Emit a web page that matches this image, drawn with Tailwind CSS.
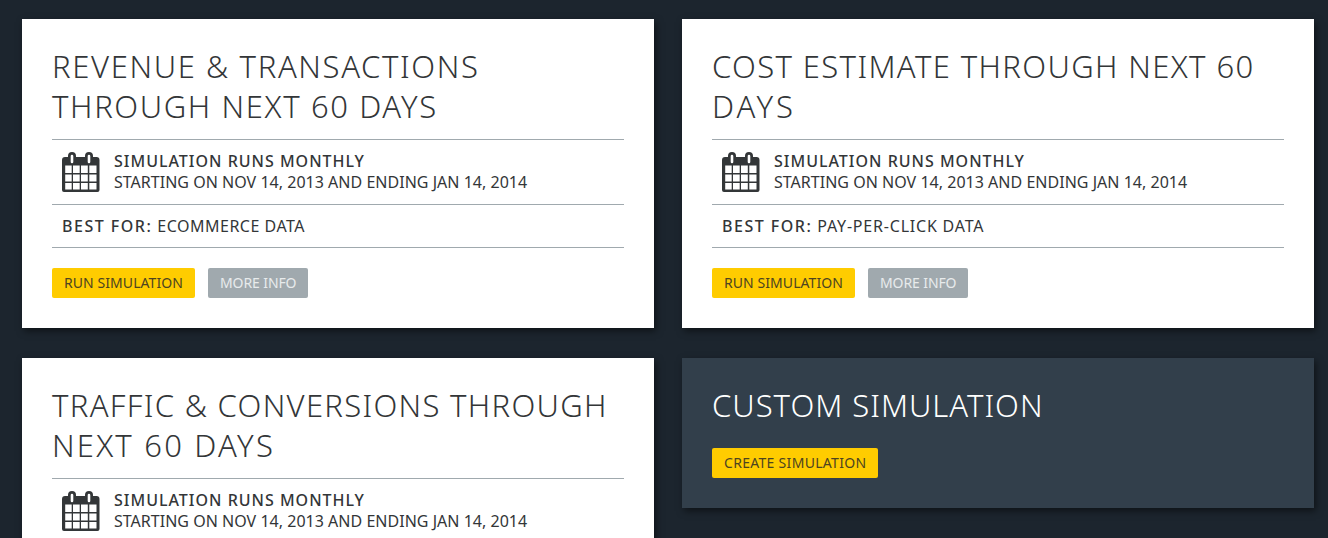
<!DOCTYPE html>
<html lang="en">
<head>
    <meta charset="UTF-8">
    <title>Simulations</title>
    <script src="https://cdn.jsdelivr.net/npm/@tailwindcss/browser@4"></script>
</head>
<body class="bg-[#1c252e] h-[538px] overflow-hidden font-['Noto_Sans',sans-serif]">
    <div class="grid grid-cols-[632px_632px] gap-x-[28px] gap-y-[30px] pl-[22px] pt-[19px] items-start">

        <!-- Revenue card -->
        <div class="bg-white px-[30px] pt-[27px] pb-[30px] shadow-[2px_3px_7px_rgba(0,0,0,0.5)]">
            <h2 class="text-[31px] leading-[40px] font-light tracking-[1.62px] text-[#333638] pb-[13px] border-b border-[#a0a9ae]">REVENUE &amp; TRANSACTIONS THROUGH NEXT 60 DAYS</h2>
            <div class="flex items-center gap-[14px] pl-[10px] h-[65px] border-b border-[#a0a9ae]">
                <svg class="w-[38px] h-[40px] shrink-0" viewBox="0 0 38 40"><path fill="#333638" fill-rule="evenodd" d="M3 5h3V4a4 4 0 0 1 8 0v1h9V4a4 4 0 0 1 8 0v1h3.5a3 3 0 0 1 3 3v30a2 2 0 0 1-2 2H2a2 2 0 0 1-2-2V8a3 3 0 0 1 3-3ZM8.7 4v6a1.3 1.3 0 0 0 2.6 0V4a1.3 1.3 0 0 0-2.6 0Zm17 0v6a1.3 1.3 0 0 0 2.6 0V4a1.3 1.3 0 0 0-2.6 0ZM3.2 13.5V21h6.5v-7.5Zm7.8 0V21h6.7v-7.5Zm8 0V21h6.8v-7.5Zm8.3 0V21h7.2v-7.5ZM3.2 22.5v7h6.5v-7Zm7.8 0v7h6.7v-7Zm8 0v7h6.8v-7Zm8.3 0v7h7.2v-7ZM3.2 31v6.5h6.5V31Zm7.8 0v6.5h6.7V31Zm8 0v6.5h6.8V31Zm8.3 0v6.5h7.2V31Z"/></svg>
                <div class="text-[16px] leading-[21px] text-[#333638]">
                    <div class="font-medium tracking-[1px]">SIMULATION RUNS MONTHLY</div>
                    <div class="tracking-[0.02px]">STARTING ON NOV 14, 2013 AND ENDING JAN 14, 2014</div>
                </div>
            </div>
            <div class="pl-[10px] pb-[1px] h-[43px] flex items-center gap-[5px] text-[16px] text-[#333638] border-b border-[#a0a9ae]">
                <span class="font-medium tracking-[1.5px]">BEST FOR:</span><span class="tracking-[0.5px]">ECOMMERCE DATA</span>
            </div>
            <div class="flex gap-[13px] mt-[20px]">
                <button class="h-[30px] pb-[1px] px-[12px] bg-[#ffcc00] rounded-[2px] text-[14px] tracking-[0.07px] text-[#4d4420]">RUN SIMULATION</button>
                <button class="h-[30px] pb-[1px] px-[12px] bg-[#a0a9ae] rounded-[2px] text-[14px] tracking-[-0.1px] text-[#e8ebec]">MORE INFO</button>
            </div>
        </div>

        <!-- Cost card -->
        <div class="bg-white px-[30px] pt-[27px] pb-[30px] shadow-[2px_3px_7px_rgba(0,0,0,0.5)]">
            <h2 class="text-[31px] leading-[40px] font-light tracking-[1.37px] text-[#333638] pb-[13px] border-b border-[#a0a9ae]">COST ESTIMATE THROUGH NEXT 60 <span class="tracking-[3px]">DAYS</span></h2>
            <div class="flex items-center gap-[14px] pl-[10px] h-[65px] border-b border-[#a0a9ae]">
                <svg class="w-[38px] h-[40px] shrink-0" viewBox="0 0 38 40"><path fill="#333638" fill-rule="evenodd" d="M3 5h3V4a4 4 0 0 1 8 0v1h9V4a4 4 0 0 1 8 0v1h3.5a3 3 0 0 1 3 3v30a2 2 0 0 1-2 2H2a2 2 0 0 1-2-2V8a3 3 0 0 1 3-3ZM8.7 4v6a1.3 1.3 0 0 0 2.6 0V4a1.3 1.3 0 0 0-2.6 0Zm17 0v6a1.3 1.3 0 0 0 2.6 0V4a1.3 1.3 0 0 0-2.6 0ZM3.2 13.5V21h6.5v-7.5Zm7.8 0V21h6.7v-7.5Zm8 0V21h6.8v-7.5Zm8.3 0V21h7.2v-7.5ZM3.2 22.5v7h6.5v-7Zm7.8 0v7h6.7v-7Zm8 0v7h6.8v-7Zm8.3 0v7h7.2v-7ZM3.2 31v6.5h6.5V31Zm7.8 0v6.5h6.7V31Zm8 0v6.5h6.8V31Zm8.3 0v6.5h7.2V31Z"/></svg>
                <div class="text-[16px] leading-[21px] text-[#333638]">
                    <div class="font-medium tracking-[1px]">SIMULATION RUNS MONTHLY</div>
                    <div class="tracking-[0.02px]">STARTING ON NOV 14, 2013 AND ENDING JAN 14, 2014</div>
                </div>
            </div>
            <div class="pl-[10px] pb-[1px] h-[43px] flex items-center gap-[5px] text-[16px] text-[#333638] border-b border-[#a0a9ae]">
                <span class="font-medium tracking-[1.5px]">BEST FOR:</span><span class="tracking-[0.8px]">PAY-PER-CLICK DATA</span>
            </div>
            <div class="flex gap-[13px] mt-[20px]">
                <button class="h-[30px] pb-[1px] px-[12px] bg-[#ffcc00] rounded-[2px] text-[14px] tracking-[0.07px] text-[#4d4420]">RUN SIMULATION</button>
                <button class="h-[30px] pb-[1px] px-[12px] bg-[#a0a9ae] rounded-[2px] text-[14px] tracking-[-0.1px] text-[#e8ebec]">MORE INFO</button>
            </div>
        </div>

        <!-- Traffic card -->
        <div class="bg-white px-[30px] pt-[27px] pb-[30px] shadow-[2px_3px_7px_rgba(0,0,0,0.5)]">
            <h2 class="text-[31px] leading-[40px] font-light tracking-[1.3px] text-[#333638] pb-[13px] border-b border-[#a0a9ae]">TRAFFIC &amp; CONVERSIONS THROUGH <span class="tracking-[2.2px]">NEXT 60 DAYS</span></h2>
            <div class="flex items-center gap-[14px] pl-[10px] h-[65px] border-b border-[#a0a9ae]">
                <svg class="w-[38px] h-[40px] shrink-0" viewBox="0 0 38 40"><path fill="#333638" fill-rule="evenodd" d="M3 5h3V4a4 4 0 0 1 8 0v1h9V4a4 4 0 0 1 8 0v1h3.5a3 3 0 0 1 3 3v30a2 2 0 0 1-2 2H2a2 2 0 0 1-2-2V8a3 3 0 0 1 3-3ZM8.7 4v6a1.3 1.3 0 0 0 2.6 0V4a1.3 1.3 0 0 0-2.6 0Zm17 0v6a1.3 1.3 0 0 0 2.6 0V4a1.3 1.3 0 0 0-2.6 0ZM3.2 13.5V21h6.5v-7.5Zm7.8 0V21h6.7v-7.5Zm8 0V21h6.8v-7.5Zm8.3 0V21h7.2v-7.5ZM3.2 22.5v7h6.5v-7Zm7.8 0v7h6.7v-7Zm8 0v7h6.8v-7Zm8.3 0v7h7.2v-7ZM3.2 31v6.5h6.5V31Zm7.8 0v6.5h6.7V31Zm8 0v6.5h6.8V31Zm8.3 0v6.5h7.2V31Z"/></svg>
                <div class="text-[16px] leading-[21px] text-[#333638]">
                    <div class="font-medium tracking-[1px]">SIMULATION RUNS MONTHLY</div>
                    <div class="tracking-[0.02px]">STARTING ON NOV 14, 2013 AND ENDING JAN 14, 2014</div>
                </div>
            </div>
        </div>

        <!-- Custom card -->
        <div class="bg-[#323f4b] px-[30px] pt-[27px] pb-[30px] shadow-[2px_3px_7px_rgba(0,0,0,0.5)]">
            <h2 class="text-[31px] leading-[40px] font-light tracking-[1px] text-white pb-[23px]">CUSTOM SIMULATION</h2>
            <button class="h-[30px] pb-[1px] px-[12px] bg-[#ffcc00] rounded-[2px] text-[14px] tracking-[0.3px] text-[#4d4420]">CREATE SIMULATION</button>
        </div>
    </div>
</body>
</html>
